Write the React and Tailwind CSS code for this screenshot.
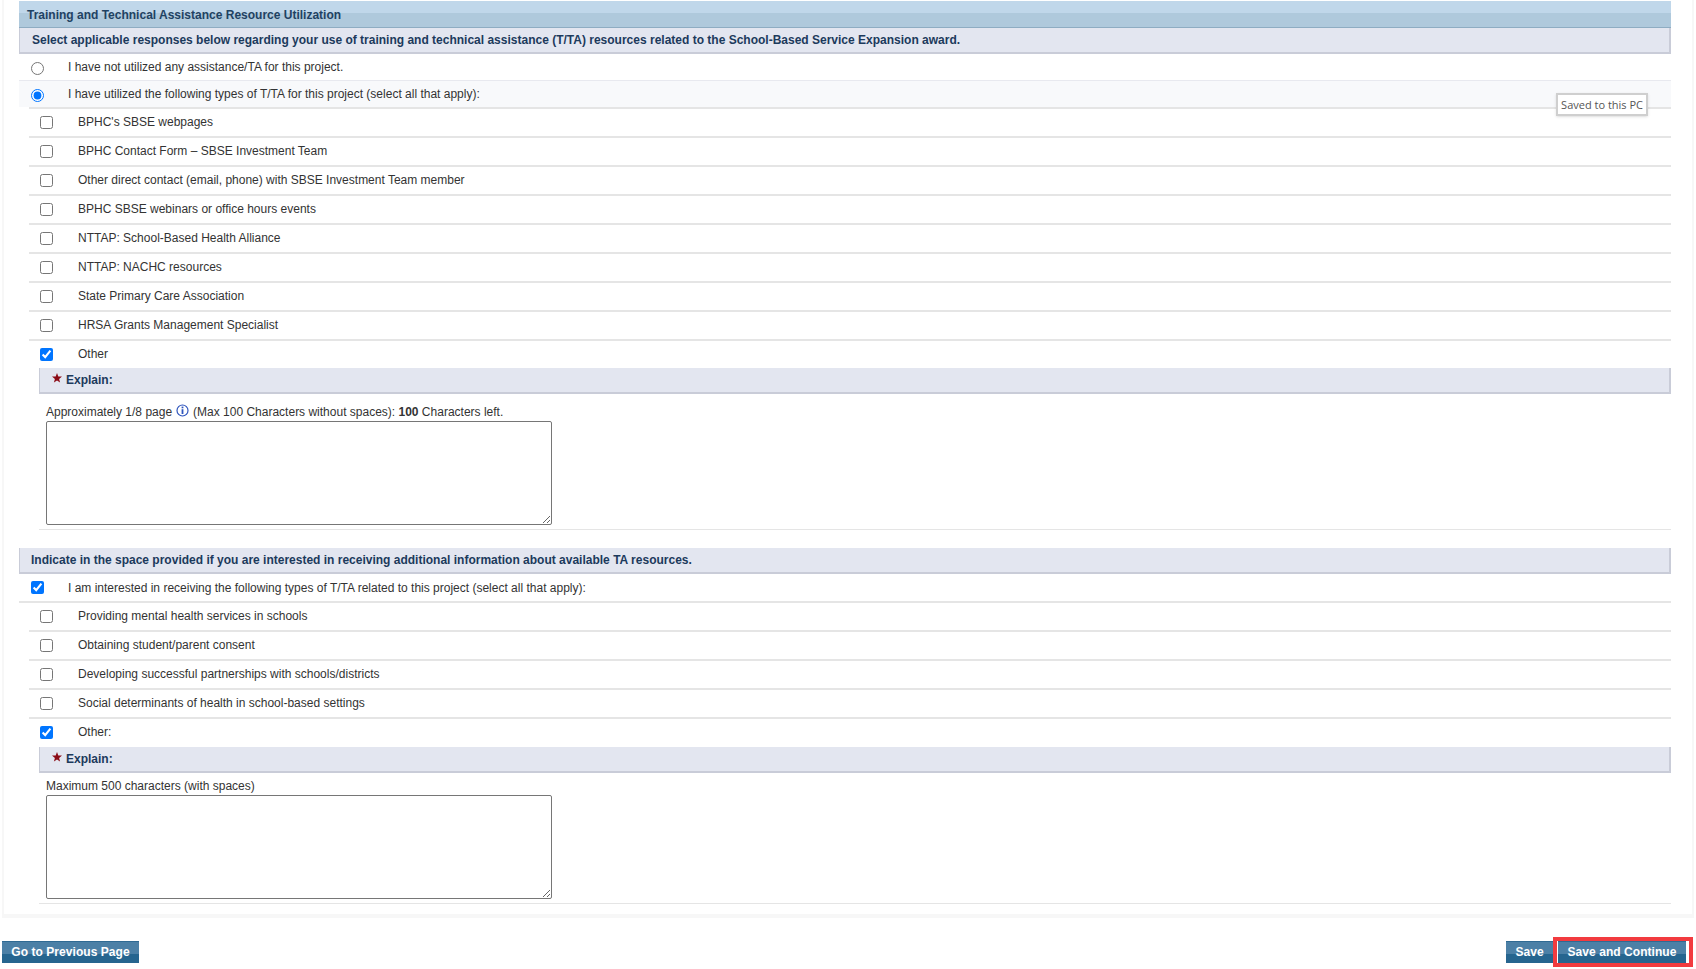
import React from 'react';

const usedOptions = [
  { label: "BPHC's SBSE webpages" },
  { label: 'BPHC Contact Form – SBSE Investment Team' },
  { label: 'Other direct contact (email, phone) with SBSE Investment Team member' },
  { label: 'BPHC SBSE webinars or office hours events' },
  { label: 'NTTAP: School-Based Health Alliance' },
  { label: 'NTTAP: NACHC resources' },
  { label: 'State Primary Care Association' },
  { label: 'HRSA Grants Management Specialist' },
];

const interestOptions = [
  { label: 'Providing mental health services in schools' },
  { label: 'Obtaining student/parent consent' },
  { label: 'Developing successful partnerships with schools/districts' },
  { label: 'Social determinants of health in school-based settings' },
];

const CheckRow = ({ label, checked }) => (
  <div className="ml-[10px] flex h-[29px] items-center border-b-2 border-[#e5e5e5] pl-[11px]">
    <input type="checkbox" defaultChecked={checked} className="m-0 h-[13px] w-[13px] shrink-0" />
    <span className="mb-[2px] ml-[25px]">{label}</span>
  </div>
);

const SubHeader = ({ children, className }) => (
  <div className={`flex h-[26px] items-center border-r-2 border-b-2 border-l border-[#c9ccd8] bg-[#e3e6f0] font-bold text-[#1c3a5c] ${className}`}>
    {children}
  </div>
);

const ExplainHeader = () => (
  <div className="ml-[20px] flex h-[26px] items-center border-r-2 border-b-2 border-l border-[#c9ccd8] bg-[#e3e6f0] pl-[12px] font-bold text-[#1c3a5c]">
    <svg width="10" height="10" viewBox="0 0 10 10" className="mb-[5px] shrink-0">
      <polygon points="5,0 6.3,3.4 10,3.6 7.1,5.9 8.1,9.6 5,7.5 1.9,9.6 2.9,5.9 0,3.6 3.7,3.4" fill="#8b0b16" />
    </svg>
    <span className="ml-[4px]">Explain:</span>
  </div>
);

const InfoIcon = () => (
  <svg width="13" height="13" viewBox="0 0 13 13" className="mx-[4px] mb-[5px] inline-block align-middle">
    <circle cx="6.5" cy="6.5" r="5.5" fill="none" stroke="#2f55bd" strokeWidth="1.2" />
    <rect x="5.6" y="2.6" width="1.8" height="1.7" fill="#2f55bd" />
    <rect x="5.6" y="5.2" width="1.8" height="4.8" fill="#2f55bd" />
  </svg>
);

const ExplainBox = ({ children, labelClass }) => (
  <div className="ml-[20px] border-b border-[#e5e5e5] pl-[7px]">
    <div className={`leading-[18px] ${labelClass}`}>{children}</div>
    <textarea className="block h-[104px] w-[506px] rounded-[2px] border border-[#767676] bg-white" />
    <div className="h-[4px]" />
  </div>
);

const BlueButton = ({ children, className }) => (
  <button className={`h-[22px] border-t border-[#2f6a93] bg-[linear-gradient(#4c80a6_0%,#4c80a6_58%,#26658f_58%,#26658f_100%)] pb-[2px] text-[12px] font-bold tracking-[0.05px] text-white ${className}`}>
    {children}
  </button>
);

export default function App() {
  return (
    <div className="min-h-[969px] bg-white pt-0 font-['Liberation_Sans',Arial,sans-serif] text-[12px] text-[#333333]">
      <div className="relative mx-[2px] h-[918px] border-x-2 border-b-4 border-[#f7f7f7] pt-px pr-[21px] pl-[15px]">
        <div className="flex h-[27px] items-center border-b border-[#8eacc2] bg-[linear-gradient(#c0d7ea_0%,#c0d7ea_46%,#afc9dc_46%,#afc9dc_100%)] pt-[2px] pl-[8px] font-bold text-[#1f4263]">
          Training and Technical Assistance Resource Utilization
        </div>
        <SubHeader className="pl-[12px]">Select applicable responses below regarding your use of training and technical assistance (T/TA) resources related to the School-Based Service Expansion award.</SubHeader>

        <div className="flex h-[27px] items-center border-b border-[#e8e9ef] pl-[12px]">
          <input type="radio" name="used" className="m-0 mt-[2px] h-[13px] w-[13px] shrink-0" />
          <span className="ml-[24px]">I have not utilized any assistance/TA for this project.</span>
        </div>
        <div className="flex h-[26px] items-center bg-[#f8f9fb] pl-[12px]">
          <input type="radio" name="used" defaultChecked className="m-0 mt-[2px] h-[13px] w-[13px] shrink-0" />
          <span className="ml-[24px]">I have utilized the following types of T/TA for this project (select all that apply):</span>
        </div>

        <div className="ml-[10px] h-[2px] bg-[#e5e5e5]" />
        {usedOptions.map((option) => (
          <CheckRow key={option.label} label={option.label} />
        ))}
        <div className="ml-[10px] flex h-[27px] items-center pl-[11px]">
          <input type="checkbox" defaultChecked className="m-0 h-[13px] w-[13px] shrink-0" />
          <span className="mb-[2px] ml-[25px]">Other</span>
        </div>
        <ExplainHeader />
        <ExplainBox labelClass="h-[27px] pt-[9px]">
          Approximately 1/8 page<InfoIcon />(Max 100 Characters without spaces): <b>100</b> Characters left.
        </ExplainBox>

        <SubHeader className="mt-[18px] pl-[11px]">Indicate in the space provided if you are interested in receiving additional information about available TA resources.</SubHeader>
        <div className="flex h-[29px] items-center border-b-2 border-[#e5e5e5] pl-[12px]">
          <input type="checkbox" defaultChecked className="m-0 h-[13px] w-[13px] shrink-0" />
          <span className="ml-[24px]">I am interested in receiving the following types of T/TA related to this project (select all that apply):</span>
        </div>
        {interestOptions.map((option) => (
          <CheckRow key={option.label} label={option.label} />
        ))}
        <div className="ml-[10px] flex h-[28px] items-center pl-[11px]">
          <input type="checkbox" defaultChecked className="m-0 mb-[1px] h-[13px] w-[13px] shrink-0" />
          <span className="mb-[2px] ml-[25px]">Other:</span>
        </div>
        <ExplainHeader />
        <ExplainBox labelClass="h-[22px] pt-[4px]">Maximum 500 characters (with spaces)</ExplainBox>

        <div className="absolute top-[93px] right-[44px] border-2 border-[#cfcfcf] bg-white px-[3px] py-[2px] font-['Open_Sans',sans-serif] text-[11px] leading-[15px] text-[#555555] shadow-sm">
          Saved to this PC
        </div>
      </div>

      <div className="mt-[19px] flex items-center justify-between pr-[3px] pl-[2px]">
        <BlueButton className="w-[137px]">Go to Previous Page</BlueButton>
        <div className="flex items-center">
          <BlueButton className="w-[47px]">Save</BlueButton>
          <div className="border-[4px] border-[#f23b3f] pr-[3px] pl-px">
            <BlueButton className="block w-[128px]">Save and Continue</BlueButton>
          </div>
        </div>
      </div>
    </div>
  );
}
